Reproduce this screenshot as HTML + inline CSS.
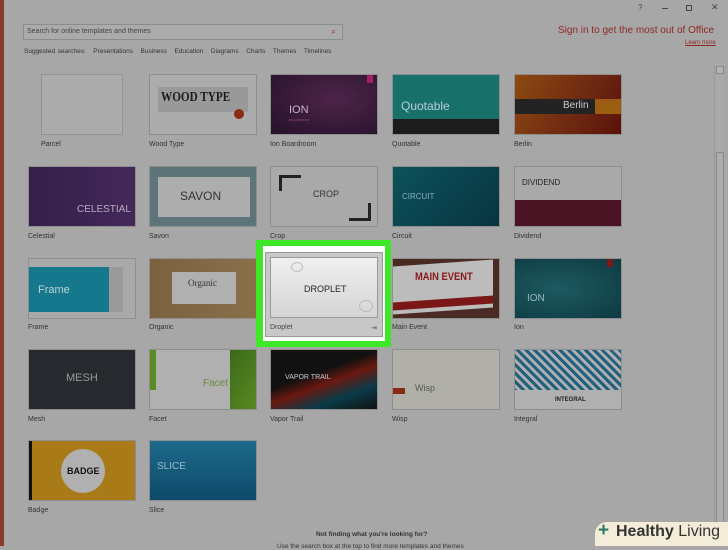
<!DOCTYPE html>
<html><head><meta charset="utf-8"><style>
*{margin:0;padding:0;box-sizing:border-box}
body{width:728px;height:546px;overflow:hidden;background:#a7a7a7;font-family:"Liberation Sans",sans-serif;position:relative;color:#2a2a2a}
.a{position:absolute}
.t{position:absolute;width:108px;height:61px;overflow:hidden;border:1px solid #8e8e8e}
.l{position:absolute;font-size:7px;color:#333}
.tx{position:absolute;white-space:nowrap}
</style></head><body>
<div class="a" style="left:0;top:0;width:4px;height:546px;background:#8a3a2a"></div>
<div class="a tx" style="left:638px;top:3px;font-size:8px;color:#444">?</div>
<div class="a" style="left:662px;top:8px;width:6px;height:1px;background:#444"></div>
<div class="a" style="left:686px;top:5px;width:6px;height:6px;border:1px solid #444"></div>
<div class="a tx" style="left:711px;top:2px;font-size:9px;color:#444">✕</div>
<div class="a tx" style="left:558px;top:25px;font-size:10px;color:#8e2a22">Sign in to get the most out of Office</div>
<div class="a tx" style="left:685px;top:40px;font-size:6px;color:#8e2a22;text-decoration:underline">Learn more</div>
<div class="a" style="left:23px;top:24px;width:320px;height:16px;border:1px solid #8c8c8c;background:#ababab"></div>
<div class="a tx" style="left:27px;top:28px;font-size:7px;color:#444">Search for online templates and themes</div>
<div class="a tx" style="left:331px;top:26px;font-size:9px;color:#8e2a22">⌕</div>
<div class="a tx" style="left:24px;top:48px;font-size:6.5px;color:#333;word-spacing:0.7px">Suggested searches:&nbsp;&nbsp;&nbsp;Presentations&nbsp;&nbsp;&nbsp;Business&nbsp;&nbsp;&nbsp;Education&nbsp;&nbsp;&nbsp;Diagrams&nbsp;&nbsp;&nbsp;Charts&nbsp;&nbsp;&nbsp;Themes&nbsp;&nbsp;&nbsp;Timelines</div>
<div class="a" style="left:714px;top:64px;width:11px;height:482px;border-left:1px solid #999;background:#a9a9a9"></div>
<div class="a" style="left:716px;top:66px;width:8px;height:8px;border:1px solid #888;background:#b5b5b5"></div>
<div class="a" style="left:716px;top:152px;width:8px;height:380px;border:1px solid #888;background:#adadad"></div>

<div class="t" style="left:41px;top:74px;width:82px;background:#acacac;border-color:#939393"></div>
<div class="l" style="left:41px;top:141px">Parcel</div>
<div class="t" style="left:149px;top:74px;background:#acacac"><div class="a" style="left:8px;top:12px;width:90px;height:25px;background:#999"></div><div class="tx" style="left:11px;top:15px;font-family:'Liberation Serif',serif;font-weight:bold;font-size:14px;color:#1b1b1b;transform:scaleX(.8);transform-origin:left">WOOD TYPE</div><div class="a" style="left:84px;top:34px;width:10px;height:10px;border-radius:50%;background:#8a2a14"></div></div>
<div class="l" style="left:149px;top:141px">Wood Type</div>
<div class="t" style="left:270px;top:74px;background:radial-gradient(ellipse at 60% 40%,#4e2449,#24122a)"><div class="tx" style="left:18px;top:29px;font-size:11px;color:#c9b3cc">ION</div><div class="tx" style="left:18px;top:43px;font-size:3px;color:#a04a90">BOARDROOM</div><div class="a" style="left:96px;top:0;width:6px;height:8px;background:#a0206a"></div></div>
<div class="l" style="left:270px;top:141px">Ion Boardroom</div>
<div class="t" style="left:392px;top:74px;background:#17706a"><div class="a" style="left:0;top:44px;width:108px;height:17px;background:#1c1c1c"></div><div class="tx" style="left:8px;top:24px;font-size:12px;color:#bcd">Quotable</div></div>
<div class="l" style="left:392px;top:141px">Quotable</div>
<div class="t" style="left:514px;top:74px;background:linear-gradient(120deg,#8d4a10,#6e2812 60%,#5a1208)"><div class="a" style="left:0;top:24px;width:80px;height:15px;background:#232323"></div><div class="a" style="left:80px;top:24px;width:28px;height:15px;background:#9c5c12"></div><div class="tx" style="left:48px;top:25px;font-size:10px;color:#ccc">Berlin</div></div>
<div class="l" style="left:514px;top:141px">Berlin</div>

<div class="t" style="left:28px;top:166px;background:linear-gradient(90deg,#34204a,#44285a)"><div class="tx" style="left:48px;top:37px;font-size:10px;color:#b8aac4">CELESTIAL</div></div>
<div class="l" style="left:28px;top:233px">Celestial</div>
<div class="t" style="left:149px;top:166px;background:#5d7478"><div class="a" style="left:8px;top:10px;width:92px;height:40px;background:#adadad"></div><div class="tx" style="left:30px;top:22px;font-size:12px;color:#333">SAVON</div></div>
<div class="l" style="left:149px;top:233px">Savon</div>
<div class="t" style="left:270px;top:166px;background:#a9a9a9"><div class="a" style="left:8px;top:8px;width:22px;height:16px;border-left:3px solid #222;border-top:3px solid #222"></div><div class="a" style="left:78px;top:36px;width:22px;height:18px;border-right:3px solid #222;border-bottom:3px solid #222"></div><div class="tx" style="left:42px;top:22px;font-size:9px;color:#333">CROP</div></div>
<div class="l" style="left:270px;top:233px">Crop</div>
<div class="t" style="left:392px;top:166px;background:linear-gradient(135deg,#0c525a,#083442)"><div class="tx" style="left:9px;top:25px;font-size:8px;color:#8ac">CIRCUIT</div></div>
<div class="l" style="left:392px;top:233px">Circuit</div>
<div class="t" style="left:514px;top:166px;background:#aaa"><div class="a" style="left:0;top:33px;width:108px;height:28px;background:#4a1425"></div><div class="tx" style="left:7px;top:11px;font-size:8px;color:#222">DIVIDEND</div></div>
<div class="l" style="left:514px;top:233px">Dividend</div>

<div class="t" style="left:28px;top:258px;background:#a9a9a9"><div class="a" style="left:0;top:8px;width:80px;height:45px;background:#16788c"></div><div class="a" style="left:80px;top:8px;width:14px;height:45px;background:#9a9a9a"></div><div class="tx" style="left:9px;top:25px;font-size:11px;color:#b8d4d8">Frame</div></div>
<div class="l" style="left:28px;top:324px">Frame</div>
<div class="t" style="left:149px;top:258px;background:linear-gradient(90deg,#7a6240,#8a6f4a)"><div class="a" style="left:22px;top:13px;width:64px;height:32px;background:#b0b0b0"></div><div class="tx" style="left:38px;top:19px;font-family:'Liberation Serif',serif;font-size:9px;color:#333">Organic</div></div>
<div class="l" style="left:149px;top:324px">Organic</div>
<div class="a" style="left:256px;top:240px;width:135px;height:107px;background:#3ee829"></div>
<div class="a" style="left:263px;top:246px;width:122px;height:95px;background:#fff"></div>
<div class="a" style="left:265px;top:252px;width:118px;height:85px;border:1px solid #999;background:#c8c8c8"></div>
<div class="a" style="left:270px;top:257px;width:108px;height:61px;border:1px solid #999;background:linear-gradient(180deg,#f0f0f0,#d4d4d4)"><div class="a" style="left:20px;top:4px;width:12px;height:10px;border:1px solid #bbb;border-radius:50%"></div><div class="a" style="left:88px;top:42px;width:14px;height:12px;border:1px solid #bbb;border-radius:50%"></div><div class="tx" style="left:33px;top:26px;font-size:9px;color:#222">DROPLET</div></div>
<div class="l" style="left:270px;top:324px;color:#444">Droplet</div>
<div class="l" style="left:371px;top:324px;color:#555">⇥</div>
<div class="t" style="left:392px;top:258px;background:#4a2a22"><div class="a" style="left:0;top:4px;width:100px;height:48px;background:#bcbcbc;transform:skewY(-4deg)"></div><div class="a" style="left:0;top:40px;width:100px;height:8px;background:#7a1818;transform:skewY(-4deg)"></div><div class="tx" style="left:22px;top:12px;font-size:11px;font-weight:bold;color:#8a1818;transform:scaleX(.85);transform-origin:left">MAIN EVENT</div></div>
<div class="l" style="left:392px;top:324px">Main Event</div>
<div class="t" style="left:514px;top:258px;background:radial-gradient(ellipse at 40% 50%,#1d5a60,#0e3a42)"><div class="tx" style="left:12px;top:34px;font-size:10px;color:#9bb">ION</div><div class="a" style="left:92px;top:0;width:6px;height:8px;background:#7a1818"></div></div>
<div class="l" style="left:514px;top:324px">Ion</div>

<div class="t" style="left:28px;top:349px;background:#262a2e"><div class="tx" style="left:37px;top:22px;font-size:11px;color:#999">MESH</div></div>
<div class="l" style="left:28px;top:416px">Mesh</div>
<div class="t" style="left:149px;top:349px;background:#b0b0b0"><div class="a" style="left:80px;top:0;width:28px;height:61px;background:linear-gradient(120deg,#3a6a1a,#5a8a22)"></div><div class="a" style="left:0;top:0;width:6px;height:40px;background:#5a8a22"></div><div class="tx" style="left:53px;top:28px;font-size:10px;color:#6a8a3a">Facet</div></div>
<div class="l" style="left:149px;top:416px">Facet</div>
<div class="t" style="left:270px;top:349px;background:linear-gradient(160deg,#111 40%,#6a1810 55%,#0a3a48 75%,#111)"><div class="tx" style="left:14px;top:24px;font-size:7px;color:#ccc">VAPOR TRAIL</div></div>
<div class="l" style="left:270px;top:416px">Vapor Trail</div>
<div class="t" style="left:392px;top:349px;background:#b0b0a8"><div class="a" style="left:0;top:38px;width:12px;height:6px;background:#8a2a14"></div><div class="tx" style="left:22px;top:33px;font-size:9px;color:#555">Wisp</div></div>
<div class="l" style="left:392px;top:416px">Wisp</div>
<div class="t" style="left:514px;top:349px;background:repeating-linear-gradient(45deg,#22607e 0 3px,#b0b0b0 3px 6px)"><div class="a" style="left:0;top:40px;width:108px;height:21px;background:#b0b0b0"></div><div class="tx" style="left:40px;top:47px;font-size:6px;font-weight:bold;color:#222">INTEGRAL</div></div>
<div class="l" style="left:514px;top:416px">Integral</div>

<div class="t" style="left:28px;top:440px;background:#a87a18"><div class="a" style="left:0;top:0;width:3px;height:61px;background:#111"></div><div class="a" style="left:32px;top:8px;width:44px;height:44px;border-radius:50%;background:#b0b0b0"></div><div class="tx" style="left:38px;top:25px;font-size:9px;font-weight:bold;color:#111">BADGE</div></div>
<div class="l" style="left:28px;top:507px">Badge</div>
<div class="t" style="left:149px;top:440px;background:linear-gradient(180deg,#1e6a8a,#0e4a6a)"><div class="tx" style="left:7px;top:20px;font-size:10px;color:#9bc">SLICE</div></div>
<div class="l" style="left:149px;top:507px">Slice</div>
<div class="a tx" style="left:316px;top:531px;font-size:6.5px;font-weight:bold;color:#333">Not finding what you're looking for?</div>
<div class="a tx" style="left:277px;top:543px;font-size:6.5px;color:#333">Use the search box at the top to find more templates and themes</div>
<div class="a" style="left:595px;top:522px;width:133px;height:24px;background:#f3ecd8;border-radius:12px 0 0 0"></div>
<div class="a tx" style="left:598px;top:520px;font-size:19px;font-weight:bold;color:#2a7a6a">+</div>
<div class="a tx" style="left:616px;top:523px;font-size:16px;color:#333"><b>Healthy</b> Living</div>
</body></html>
